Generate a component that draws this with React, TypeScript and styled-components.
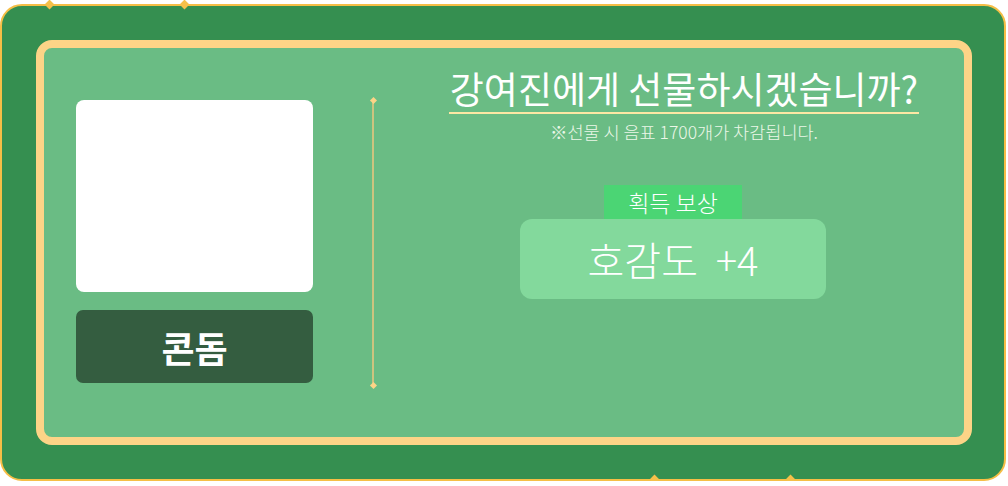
import styled, { createGlobalStyle } from "styled-components";

const GlobalStyle = createGlobalStyle`
  html, body {
    margin: 0;
    padding: 0;
    background: #ffffff;
    font-family: "Noto Sans CJK KR", "Noto Sans", sans-serif;
  }
  * {
    box-sizing: border-box;
  }
`;

const gift = {
  target: "강여진",
  item: "콘돔",
  cost: 1700,
  rewardName: "호감도",
  rewardValue: 4,
};

const diamonds = [
  { side: "top", x: 44 },
  { side: "top", x: 179 },
  { side: "bottom", x: 649 },
  { side: "bottom", x: 785 },
] as const;

export default function App() {
  return (
    <>
      <GlobalStyle />
      <Frame>
        {diamonds.map((d, i) => (
          <Diamond key={i} $side={d.side} $x={d.x} />
        ))}
        <Panel>
          <ItemColumn>
            <ItemImage />
            <ItemName>{gift.item}</ItemName>
          </ItemColumn>

          <Divider />

          <ConfirmColumn>
            <Title>{gift.target}에게 선물하시겠습니까?</Title>
            <Notice>※선물 시 음표 {gift.cost}개가 차감됩니다.</Notice>

            <Reward>
              <RewardLabel>획득 보상</RewardLabel>
              <RewardBox>
                {gift.rewardName}&nbsp;&nbsp;+{gift.rewardValue}
              </RewardBox>
            </Reward>
          </ConfirmColumn>
        </Panel>
      </Frame>
    </>
  );
}

const Frame = styled.div`
  position: relative;
  margin-top: 4px;
  width: 1006px;
  height: 477px;
  padding: 34px 32px 34px 34px;
  background: #358f50;
  border: 2px solid #f5be46;
  border-radius: 22px;
`;

const Diamond = styled.span<{ $side: "top" | "bottom"; $x: number }>`
  position: absolute;
  left: ${(p) => p.$x}px;
  ${(p) => (p.$side === "top" ? "top: -5px;" : "bottom: -4px;")}
  width: 7px;
  height: 7px;
  background: #f5c04a;
  transform: rotate(45deg);
`;

const Panel = styled.div`
  display: flex;
  align-items: flex-start;
  width: 936px;
  height: 405px;
  padding: 18px 0 0 32px;
  background: #6abc84;
  border: 8px solid #fdd487;
  border-radius: 16px;
`;

const ItemColumn = styled.div`
  display: flex;
  flex-direction: column;
  gap: 18px;
  width: 237px;
  margin-top: 34px;
`;

const ItemImage = styled.div`
  height: 192px;
  background: #ffffff;
  border-radius: 8px;
`;

const ItemName = styled.div`
  display: flex;
  align-items: center;
  justify-content: center;
  height: 73px;
  background: #345d40;
  border-radius: 7px;
  color: #ffffff;
  font-size: 36px;
  font-weight: 700;
  line-height: 1;
`;

const Divider = styled.div`
  position: relative;
  width: 2px;
  height: 286px;
  margin: 34px 0 0 59px;
  background: #cdc47f;

  &::before,
  &::after {
    content: "";
    position: absolute;
    left: -1.5px;
    width: 5px;
    height: 5px;
    background: #fdd487;
    transform: rotate(45deg);
  }
  &::before {
    top: -2px;
  }
  &::after {
    bottom: -2px;
  }
`;

const ConfirmColumn = styled.div`
  display: flex;
  flex-direction: column;
  align-items: flex-start;
  width: 470px;
  margin-left: 75px;
`;

const Title = styled.h2`
  width: 100%;
  height: 48px;
  margin: 0;
  border-bottom: 2px solid #fde7a4;
  color: #ffffff;
  font-size: 37px;
  font-weight: 400;
  line-height: 44px;
  text-align: center;
  white-space: nowrap;
`;

const Notice = styled.p`
  width: 100%;
  margin: 7px 0 0;
  color: #ecf7e8;
  font-size: 17.5px;
  font-weight: 300;
  line-height: 22px;
  text-align: center;
  white-space: nowrap;
`;

const Reward = styled.div`
  display: flex;
  flex-direction: column;
  align-items: center;
  width: 306px;
  margin: 42px 0 0 71px;
`;

const RewardLabel = styled.div`
  display: flex;
  align-items: center;
  justify-content: center;
  width: 138px;
  height: 34px;
  background: #4bd574;
  color: #ffffff;
  font-size: 23px;
  font-weight: 300;
  line-height: 1;
`;

const RewardBox = styled.div`
  display: flex;
  align-items: center;
  justify-content: center;
  width: 100%;
  height: 80px;
  background: #83d99c;
  border-radius: 12px;
  color: #ffffff;
  font-size: 40px;
  font-weight: 200;
  line-height: 1;
  white-space: nowrap;
`;
